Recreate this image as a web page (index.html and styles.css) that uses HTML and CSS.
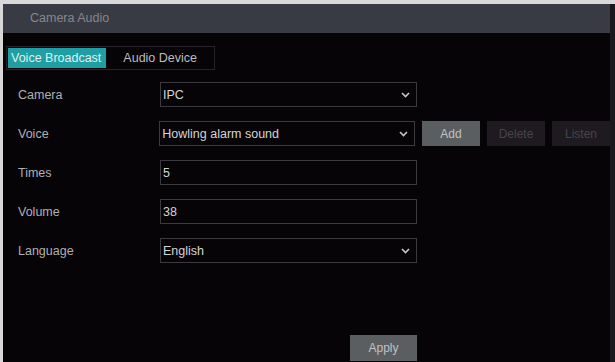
FILE: index.html
```html
<!DOCTYPE html>
<html lang="en">
<head>
    <meta charset="UTF-8">
    <title>Camera Audio</title>
    <link rel="stylesheet" href="styles.css">
</head>
<body>
    <div class="window">
        <div class="title-bar">Camera Audio</div>

        <div class="tabs">
            <div class="tab active">Voice Broadcast</div>
            <div class="tab">Audio Device</div>
        </div>

        <div class="form">
            <div class="row">
                <label>Camera</label>
                <div class="field select">
                    <span>IPC</span>
                    <svg class="chevron" width="9" height="6" viewBox="0 0 9 6"><path d="M1 1 L4.5 4.5 L8 1" fill="none" stroke="#c8c8c8" stroke-width="1.6"/></svg>
                </div>
            </div>
            <div class="row">
                <label>Voice</label>
                <div class="field select">
                    <span>Howling alarm sound</span>
                    <svg class="chevron" width="9" height="6" viewBox="0 0 9 6"><path d="M1 1 L4.5 4.5 L8 1" fill="none" stroke="#c8c8c8" stroke-width="1.6"/></svg>
                </div>
                <div class="buttons">
                    <button class="btn primary">Add</button>
                    <button class="btn disabled">Delete</button>
                    <button class="btn disabled">Listen</button>
                </div>
            </div>
            <div class="row">
                <label>Times</label>
                <div class="field"><span>5</span></div>
            </div>
            <div class="row">
                <label>Volume</label>
                <div class="field"><span>38</span></div>
            </div>
            <div class="row">
                <label>Language</label>
                <div class="field select">
                    <span>English</span>
                    <svg class="chevron" width="9" height="6" viewBox="0 0 9 6"><path d="M1 1 L4.5 4.5 L8 1" fill="none" stroke="#c8c8c8" stroke-width="1.6"/></svg>
                </div>
            </div>
        </div>

        <div class="footer">
            <button class="btn primary apply">Apply</button>
        </div>
    </div>
</body>
</html>
```

FILE: styles.css
```css
body {
    margin: 0;
    padding: 4px 0 0 3px;
    background-color: #d8d8d8;
    font-family: "Liberation Sans", Arial, sans-serif;
    font-size: 12.5px;
    overflow: hidden;
}

.window {
    height: 358px;
    background-color: #070408;
    border-right: 5px solid #1a181c;
}

.title-bar {
    height: 29px;
    line-height: 29px;
    padding-left: 27px;
    background-color: #393b44;
    color: #85878d;
}

.tabs {
    display: flex;
    width: fit-content;
    margin: 13px 0 0 3px;
    padding: 1px;
    border: 1px solid #26242a;
}

.tab {
    height: 20px;
    line-height: 20px;
    padding: 0 16px 0 17px;
    color: #bcbcbc;
}

.tab.active {
    padding: 0 5px 0 3px;
    background-color: #1f9fa3;
    color: #dff0f0;
}

.form {
    display: flex;
    flex-direction: column;
    gap: 14px;
    margin-top: 12px;
    padding-left: 15px;
}

.row {
    display: flex;
    align-items: center;
}

.row label {
    width: 142px;
    color: #b0b0b0;
}

.field {
    display: flex;
    align-items: center;
    justify-content: space-between;
    box-sizing: border-box;
    width: 257px;
    height: 25px;
    padding: 0 6px 0 2px;
    border: 1px solid #3c3a3e;
    color: #d4d4d4;
}

.buttons {
    display: flex;
    gap: 7px;
    margin-left: 7px;
}

.btn {
    box-sizing: border-box;
    width: 58px;
    height: 25px;
    border: none;
    font-family: inherit;
    font-size: 12px;
}

.btn.primary {
    background-color: #5a5e61;
    color: #c0c2c3;
}

.btn.disabled {
    background-color: #1e1a1f;
    color: #48454a;
}

.footer {
    display: flex;
    justify-content: flex-end;
    width: 414px;
    margin-top: 72px;
}

.btn.apply {
    width: 67px;
    height: 26px;
}
```
